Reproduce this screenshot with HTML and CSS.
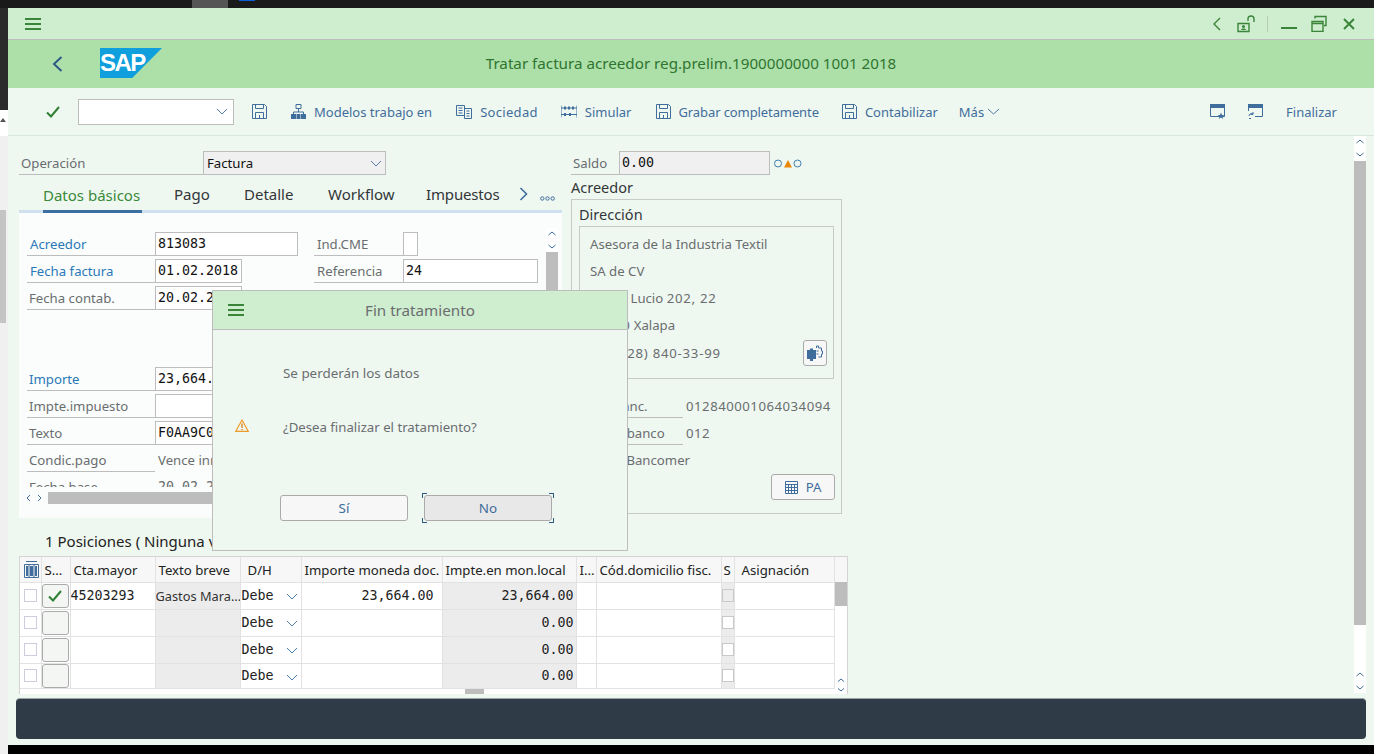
FILE: index.html
```html
<!DOCTYPE html>
<html lang="en">
<head>
    <meta charset="UTF-8">
    <title>Tratar factura acreedor</title>
    <link rel="stylesheet" href="styles.css">
</head>
<body>
    <div class="top-strip">
        <span class="strip-tab"></span>
        <span class="strip-blue"></span>
    </div>
    <div class="desk">
        <div class="side-strip">
            <div class="side-dark"></div>
            <div class="side-light"><i class="side-tri"></i></div>
            <div class="side-thumb"></div>
        </div>
        <div class="desk-main">
            <div class="window">
                <div class="titlebar">
                    <svg class="hamburger" width="16" height="12" viewBox="0 0 16 12"><path d="M0 1h16M0 6h16M0 11h16"/></svg>
                    <div class="win-btns">
                        <svg width="9" height="14" viewBox="0 0 9 14"><path class="g-line" d="M8 1 2 7l6 6"/></svg>
                        <svg width="18" height="18" viewBox="0 0 18 18"><path class="g-line" d="M1 8.500h11v8H1zM11 6V4a3 3 0 0 1 6 0v3"/><circle cx="6.500" cy="11.500" r="1.500" fill="#3a853a"/><path class="g-solid" d="M4 15c0-2 5-2 5 0z"/></svg>
                        <i class="win-sep"></i>
                        <svg width="16" height="4" viewBox="0 0 16 4"><path class="g-thick" d="M0 2h16"/></svg>
                        <svg width="16" height="17" viewBox="0 0 16 17"><path class="g-line" d="M1 6.500h11v10H1zM1 8.500h11M4 3.500V1.500h11v9h-2"/></svg>
                        <svg width="12" height="12" viewBox="0 0 12 12"><path class="g-thick" d="m1 1 10 10M11 1 1 11"/></svg>
                    </div>
                </div>
                <div class="header">
                    <svg class="back" width="11" height="16" viewBox="0 0 11 16"><path d="M9.500 1 2 8l7.500 7"/></svg>
                    <div class="sap-logo">SAP</div>
                    <h1>Tratar factura acreedor reg.prelim.1900000000 1001 2018</h1>
                </div>
                <div class="toolbar">
                    <svg class="check" width="14" height="12" viewBox="0 0 14 12"><path d="m1 6.500 4 4L13 1"/></svg>
                    <div class="combo"><svg class="chev" width="12" height="7" viewBox="0 0 12 7"><path d="m1 1 5 5 5-5"/></svg></div>
                    <svg class="ico save-first" width="15" height="15" viewBox="0 0 15 15"><path d="M.5.500h12l2 2v12H.5zM3.500.500v4h8v-4M3.500 14.500v-6h8v6M7.500 11v3"/></svg>
                    <div class="tool tool-org">
                        <svg class="ico" width="15" height="15" viewBox="0 0 15 15"><path d="M5 .500h5v4H5zM7.500 4.500V8M2.500 10V8h10v2"/><path class="solid" d="M0 10h5v5H0zM5.500 10h4v5h-4zM10 10h5v5h-5z"/></svg>
                        <span>Modelos trabajo en</span>
                    </div>
                    <div class="tool">
                        <svg class="ico" width="16" height="15" viewBox="0 0 16 15"><path d="M.5 1.500h8v10h-8zM8.500 4.500h7v10h-7zM2.500 4h4M2.500 6.500h4M2.500 9h4M10.500 7h3M10.500 9.500h3M10.500 12h3"/></svg>
                        <span class="sociedad">Sociedad</span>
                    </div>
                    <div class="tool">
                        <svg class="ico" width="16" height="13" viewBox="0 0 16 13"><path d="M0 .500v12M16 .500v12M0 3h16M0 9.500h16"/><path class="solid" d="M3 1.500h2v3H3zM7 1.500h2v3H7zM11 1.500h2v3h-2zM3 8h2v3H3zM8 8h2v3H8z"/></svg>
                        <span>Simular</span>
                    </div>
                    <div class="tool tool-grabar">
                        <svg class="ico" width="15" height="15" viewBox="0 0 15 15"><path d="M.5.500h12l2 2v12H.5zM3.500.500v4h8v-4M3.500 14.500v-6h8v6M7.500 11v3"/></svg>
                        <span>Grabar completamente</span>
                    </div>
                    <div class="tool">
                        <svg class="ico" width="15" height="15" viewBox="0 0 15 15"><path d="M.5.500h12l2 2v12H.5zM3.500.500v4h8v-4M3.500 14.500v-6h8v6M7.500 11v3"/></svg>
                        <span>Contabilizar</span>
                    </div>
                    <div class="tool mas">
                        <span>Más</span>
                        <svg class="chev" width="13" height="7" viewBox="0 0 13 7"><path d="m1 1 5.500 5L12 1"/></svg>
                    </div>
                    <div class="tool-right">
                        <svg class="ico" width="15" height="15" viewBox="0 0 15 15"><path d="M.5 2.500h14v10H.5z"/><path class="solid" d="M0 0h15v4H0zM11 8.500l1 2.500h2.500l-2 1.500.8 2.500-2.300-1.500-2.300 1.500.8-2.500-2-1.500H10z"/></svg>
                        <svg class="ico" width="15" height="15" viewBox="0 0 15 15"><path d="M.5 7V2.500h14v10H7"/><path class="solid" d="M0 0h15v4H0z"/><path d="M1 12a2.500 2.500 0 0 1 4-2M5 8v2.500H2.500M1 14.500h2"/></svg>
                        <span class="finalizar">Finalizar</span>
                    </div>
                </div>

                <div class="content">
                    <div class="sheet">
                        <div class="top-row">
                            <div class="left-col">
                                <div class="op-row">
                                    <div class="lbl op-lbl">Operación</div>
                                    <div class="select">Factura<svg class="chev" width="12" height="7" viewBox="0 0 12 7"><path d="m1 1 5 5 5-5"/></svg></div>
                                </div>
                                <div class="tabs">
                                    <span class="tab active">Datos básicos</span>
                                    <span class="tab t-pago">Pago</span>
                                    <span class="tab t-det">Detalle</span>
                                    <span class="tab t-wf">Workflow</span>
                                    <span class="tab t-imp">Impuestos</span>
                                    <svg class="tab-next" width="9" height="14" viewBox="0 0 9 14"><path d="m1.500 1 6 6-6 6"/></svg>
                                    <svg class="tab-more" width="15" height="5" viewBox="0 0 15 5"><circle cx="2.300" cy="2.500" r="1.700"/><circle cx="7.500" cy="2.500" r="1.700"/><circle cx="12.700" cy="2.500" r="1.700"/></svg>
                                </div>
                                <div class="panel">
                                    <div class="panel-top">
                                        <div class="fields">
                                            <div class="row"><div class="lbl link">Acreedor</div><div class="val">813083</div><div class="lbl lbl2">Ind.CME</div><div class="val tiny"></div></div>
                                            <div class="row"><div class="lbl link">Fecha factura</div><div class="val short">01.02.2018</div><div class="lbl lbl2">Referencia</div><div class="val">24</div></div>
                                            <div class="row"><div class="lbl">Fecha contab.</div><div class="val short">20.02.2018</div></div>
                                            <div class="row"></div>
                                            <div class="row"></div>
                                            <div class="row"><div class="lbl link-b">Importe</div><div class="val">23,664.00</div></div>
                                            <div class="row"><div class="lbl">Impte.impuesto</div><div class="val"></div></div>
                                            <div class="row"><div class="lbl">Texto</div><div class="val">F0AA9C07</div></div>
                                            <div class="row"><div class="lbl">Condic.pago</div><div class="plain">Vence inmediatamente</div></div>
                                            <div class="row"><div class="lbl">Fecha base</div><div class="plain mono">20.02.2018</div></div>
                                        </div>
                                        <div class="vscroll small">
                                            <svg width="12" height="24" viewBox="0 0 12 24"><path d="m2.500 7 3.500-3 3.500 3M2.500 17l3.500 3 3.500-3"/></svg>
                                            <div class="thumb"></div>
                                        </div>
                                    </div>
                                    <div class="hscroll">
                                        <svg width="20" height="12" viewBox="0 0 20 12"><path d="M6 3 3 6l3 3M14 3l3 3-3 3"/></svg>
                                        <div class="hthumb"></div>
                                    </div>
                                </div>
                            </div>

                            <div class="right-col">
                                <div class="saldo-row">
                                    <div class="lbl saldo-lbl">Saldo</div>
                                    <div class="val saldo-val">0.00</div>
                                    <svg class="lights" width="28" height="9" viewBox="0 0 28 9"><circle cx="4" cy="4.500" r="3.500"/><path class="tri" d="M10 8.500 14 1l4 7.500z"/><circle cx="23.500" cy="4.500" r="3.500"/></svg>
                                </div>
                                <div class="group-title">Acreedor</div>
                                <div class="group">
                                    <div class="sub-title">Dirección</div>
                                    <div class="addr">
                                        <div class="addr-line">Asesora de la Industria Textil</div>
                                        <div class="addr-line">SA de CV</div>
                                        <div class="addr-line">Av. M. Lucio <span class="dg wide">202, 22</span></div>
                                        <div class="addr-line"><span class="dg">91000</span> Xalapa</div>
                                        <div class="addr-line addr-last">
                                            <span>Tel. <span class="dg wide">(228) 840-33-99</span></span>
                                            <div class="puzzle-btn">
                                                <svg width="16" height="16" viewBox="0 0 16 16"><path class="solid" d="M0 5h3V3.500h3V5h3v9H6v2H3v-2H0z"/><path d="M9.500 3V1h2v2h3v3h1v3h-1v3h-3M9.500 6h2M9.500 9h2"/></svg>
                                            </div>
                                        </div>
                                    </div>
                                    <div class="bank-row"><div class="lbl bank-lbl">Cta.banc.</div><div class="plain dg">012840001064034094</div></div>
                                    <div class="bank-row"><div class="lbl bank-lbl">Clave banco</div><div class="plain dg">012</div></div>
                                    <div class="bank-row"><div class="bank-name">BBVA Bancomer</div></div>
                                    <div class="pa-row">
                                        <div class="pa-btn">
                                            <svg class="ico" width="13" height="13" viewBox="0 0 13 13"><path d="M.5.500h12v12H.5zM.5 3.500h12M3.500 3.500v9M6.500 3.500v9M9.500 3.500v9M.5 6.500h12M.5 9.500h12"/></svg>
                                            PA
                                        </div>
                                    </div>
                                </div>
                            </div>
                        </div>

                        <h2 class="pos-title">1 Posiciones ( Ninguna visualización )</h2>

                        <div class="tbl-wrap">
                            <div class="tbl-body">
                                <table class="grid">
                                    <colgroup>
                                        <col class="c-sel"><col class="c-s"><col class="c-cta"><col class="c-txt"><col class="c-dh"><col class="c-imp"><col class="c-loc"><col class="c-i"><col class="c-cod"><col class="c-chk"><col class="c-asg">
                                    </colgroup>
                                    <thead>
                                        <tr>
                                            <th class="th-sel"><svg width="15" height="17" viewBox="0 0 15 17"><path d="M.5 3.500h14v13H.5zM5 3.500v13M10 3.500v13"/><path class="solid" d="M2 5h2v10H2zM6 5h3v10H6zM11 5h2v10h-2z"/><path d="M2 .500h11"/></svg></th>
                                            <th>S...</th><th>Cta.mayor</th><th>Texto breve</th><th class="th-dh">D/H</th><th>Importe moneda doc.</th><th class="fixed">Impte.en mon.local</th><th>I...</th><th>Cód.domicilio fisc.</th><th class="th-chk">S</th><th class="th-asg">Asignación</th>
                                        </tr>
                                    </thead>
                                    <tbody>
                                        <tr>
                                            <td><i class="cb"></i></td>
                                            <td class="td-btn"><div class="row-btn"><svg class="check" width="14" height="12" viewBox="0 0 14 12"><path d="m1 6.500 4 4L13 1"/></svg></div></td>
                                            <td class="m">45203293</td>
                                            <td class="grey txt">Gastos Mara...</td>
                                            <td class="m dh">Debe<svg class="chev" width="12" height="7" viewBox="0 0 12 7"><path d="m1 1 5 5 5-5"/></svg></td>
                                            <td class="m num doc">23,664.00</td>
                                            <td class="m num grey fixed">23,664.00</td>
                                            <td></td><td></td>
                                            <td class="grey td-chk"><i class="sq off"></i></td>
                                            <td></td>
                                        </tr>
                                        <tr>
                                            <td><i class="cb"></i></td>
                                            <td class="td-btn"><div class="row-btn"></div></td>
                                            <td></td><td class="grey"></td>
                                            <td class="m dh">Debe<svg class="chev" width="12" height="7" viewBox="0 0 12 7"><path d="m1 1 5 5 5-5"/></svg></td>
                                            <td></td>
                                            <td class="m num grey fixed">0.00</td>
                                            <td></td><td></td>
                                            <td class="grey td-chk"><i class="sq"></i></td>
                                            <td></td>
                                        </tr>
                                        <tr>
                                            <td><i class="cb"></i></td>
                                            <td class="td-btn"><div class="row-btn"></div></td>
                                            <td></td><td class="grey"></td>
                                            <td class="m dh">Debe<svg class="chev" width="12" height="7" viewBox="0 0 12 7"><path d="m1 1 5 5 5-5"/></svg></td>
                                            <td></td>
                                            <td class="m num grey fixed">0.00</td>
                                            <td></td><td></td>
                                            <td class="grey td-chk"><i class="sq"></i></td>
                                            <td></td>
                                        </tr>
                                        <tr class="last">
                                            <td><i class="cb"></i></td>
                                            <td class="td-btn"><div class="row-btn"></div></td>
                                            <td></td><td class="grey"></td>
                                            <td class="m dh">Debe<svg class="chev" width="12" height="7" viewBox="0 0 12 7"><path d="m1 1 5 5 5-5"/></svg></td>
                                            <td></td>
                                            <td class="m num grey fixed">0.00</td>
                                            <td></td><td></td>
                                            <td class="grey td-chk"><i class="sq"></i></td>
                                            <td></td>
                                        </tr>
                                    </tbody>
                                </table>
                                <div class="tbl-hscroll"><i class="tbl-hthumb"></i></div>
                            </div>
                            <div class="tbl-vscroll">
                                <div class="tbl-vhead"></div>
                                <div class="tbl-vthumb"></div>
                                <svg width="12" height="16" viewBox="0 0 12 16"><path d="m3 3.500 3-2.500 3 2.500M3 10.500l3 2.500 3-2.500"/></svg>
                            </div>
                        </div>
                    </div>

                    <div class="vscroll main-scroll">
                        <svg width="12" height="24" viewBox="0 0 12 24"><path d="m2.500 7 3.500-3 3.500 3M2.500 17l3.500 3 3.500-3"/></svg>
                        <div class="thumb"></div>
                        <svg class="scroll-end" width="12" height="24" viewBox="0 0 12 24"><path d="m2.500 7 3.500-3 3.500 3M2.500 17l3.500 3 3.500-3"/></svg>
                    </div>
                </div>

                <div class="statusbar"></div>
            </div>
            <div class="taskbar"></div>
        </div>
    </div>

    <div class="dialog">
        <div class="dlg-head">
            <svg class="hamburger" width="16" height="12" viewBox="0 0 16 12"><path d="M0 1h16M0 6h16M0 11h16"/></svg>
            <span class="dlg-title">Fin tratamiento</span>
        </div>
        <div class="dlg-body">
            <div class="dlg-line">Se perderán los datos</div>
            <div class="dlg-line dlg-warn">
                <svg class="warn" width="14" height="13" viewBox="0 0 14 13"><path d="M7 1 .8 12.300h12.400z"/><path class="warn-mark" d="M7 4.500v4.500M7 10v1.300"/></svg>
                <span>¿Desea finalizar el tratamiento?</span>
            </div>
            <div class="dlg-btns">
                <div class="btn">Sí</div>
                <div class="btn btn-focus">No
                    <i class="cn tl"></i><i class="cn tr"></i><i class="cn bl"></i><i class="cn br"></i>
                </div>
            </div>
        </div>
    </div>
</body>
</html>
```

FILE: styles.css
```css
:root {
    --bg: #eff8f0;
    --title: #cfedcf;
    --head: #addfa9;
    --line: #bdbdbd;
    --blue: #3f6d9c;
    --green: #3a853a;
    --label: #6a6d70;
    --sans: 'Noto Sans', 'Open Sans', sans-serif;
    --mono: 'DejaVu Sans Mono', monospace;
}

* {
    margin: 0;
    padding: 0;
    box-sizing: border-box;
}

body {
    width: 1382px;
    height: 754px;
    overflow: hidden;
    background: #fff;
    font-family: var(--sans);
    font-size: 13.2px;
    color: var(--label);
    position: relative;
}

svg {
    display: block;
    flex: none;
}

svg path {
    fill: none;
    stroke: var(--blue);
}

svg path.solid,
.tab-more circle {
    fill: var(--blue);
    stroke: none;
}

/* outer desktop */
.top-strip {
    width: 1374px;
    height: 8px;
    background: #1a1a1a;
    display: flex;
}

.strip-tab {
    width: 36px;
    height: 8px;
    margin-left: 192px;
    background: #555;
}

.strip-blue {
    width: 16px;
    height: 1px;
    margin-left: 11px;
    background: #0b5ed7;
}

.desk {
    display: flex;
    height: 746px;
}

.side-strip {
    width: 8px;
    background: #f0f0f0;
    display: flex;
    flex-direction: column;
}

.side-dark {
    height: 102px;
    background: #2b2b2b;
}

.side-light {
    height: 26px;
    background: #fff;
    padding-top: 8px;
}

.side-tri {
    display: block;
    width: 0;
    height: 0;
    border: 3px solid transparent;
    border-top: 0;
    border-bottom: 4px solid #555;
}

.side-thumb {
    width: 6px;
    height: 113px;
    margin-top: 74px;
    background: #c4c4c4;
}

.desk-main {
    width: 1366px;
}

.window {
    height: 737px;
    background: var(--bg);
}

.taskbar {
    height: 9px;
    background: #000;
}

/* title bars */
.titlebar {
    height: 32px;
    background: var(--title);
    border-bottom: 1px solid var(--line);
    display: flex;
    align-items: center;
    padding: 0 19px 0 17px;
}

.hamburger path {
    stroke: var(--green);
    stroke-width: 2;
}

.win-btns {
    margin-left: auto;
    display: flex;
    align-items: center;
}

.win-btns svg:nth-child(2) {
    margin-left: 16px;
}

.win-btns svg:nth-child(4) {
    margin-left: 13px;
    margin-top: 9px;
}

.win-btns svg:nth-child(5) {
    margin-left: 14px;
}

.win-btns svg:nth-child(6) {
    margin-left: 16px;
}

.win-sep {
    width: 1px;
    height: 16px;
    margin-left: 12px;
    background: #b5ccb5;
}

svg .g-line {
    stroke: var(--green);
    stroke-width: 1.4;
}

svg .g-thick {
    stroke: var(--green);
    stroke-width: 2;
}

svg .g-solid {
    fill: var(--green);
    stroke: none;
}

.header {
    height: 48px;
    background: var(--head);
    display: flex;
    align-items: center;
    position: relative;
    padding-left: 44px;
}

.back path {
    stroke: #2d5a86;
    stroke-width: 2;
}

.sap-logo {
    width: 62px;
    height: 30px;
    margin-left: 37px;
    margin-top: -2px;
    background: #0f9fdc;
    clip-path: polygon(0 0, 100% 0, 52% 100%, 0 100%);
    color: #fff;
    font-family: 'Liberation Sans', sans-serif;
    font-weight: bold;
    font-size: 24px;
    letter-spacing: -1.5px;
    line-height: 30px;
}

.header h1 {
    position: absolute;
    left: 0;
    right: 0;
    margin-top: -2px;
    text-align: center;
    font-size: 15.2px;
    font-weight: 400;
    color: #2f7530;
}

.toolbar {
    height: 48px;
    border-bottom: 1px solid #d9e8dc;
    display: flex;
    align-items: center;
    gap: 23px;
    padding-left: 38px;
    padding-right: 37px;
    color: var(--blue);
    font-size: 13px;
}

.check path {
    stroke: #2f8034;
    stroke-width: 2;
}

.combo {
    width: 156px;
    height: 26px;
    margin-left: -5px;
    background: #fff;
    border: 1px solid var(--line);
    display: flex;
    align-items: center;
    justify-content: flex-end;
    padding-right: 5px;
}

.save-first {
    margin-left: -5px;
    margin-right: 1px;
}

.tool {
    display: flex;
    align-items: center;
    gap: 8px;
}

.tool-org {
    margin-right: 1px;
}

.sociedad {
    letter-spacing: .3px;
}

.tool-grabar {
    margin-left: 1px;
    letter-spacing: -.1px;
}

.mas {
    gap: 3px;
    margin-left: -2px;
}

.tool-right {
    margin-left: auto;
    display: flex;
    align-items: center;
    gap: 23px;
}

/* form area */
.content {
    height: 562px;
    display: flex;
}

.sheet {
    width: 841px;
    padding: 15px 0 0 11px;
}

.top-row {
    display: flex;
    height: 367px;
}

.left-col {
    width: 543px;
}

.right-col {
    width: 271px;
    margin-left: 9px;
}

.op-row {
    display: flex;
    height: 24px;
}

.lbl {
    border-bottom: 1px solid var(--line);
    line-height: 24px;
    padding-left: 2px;
    white-space: nowrap;
    overflow: hidden;
}

.op-lbl {
    width: 184px;
}

.select {
    width: 183px;
    height: 24px;
    background: #f0f0f0;
    border: 1px solid var(--line);
    color: #111;
    line-height: 22px;
    padding: 0 3px;
    display: flex;
    justify-content: space-between;
    align-items: center;
}

.chev path {
    stroke: #4f7ca8;
}

.tabs {
    height: 38px;
    display: flex;
    align-items: flex-end;
    border-bottom: 3px solid #cfe0ee;
    font-size: 15px;
    color: #32363a;
    position: relative;
}

.tab {
    line-height: 21px;
    height: 26px;
    white-space: nowrap;
}

.tab.active {
    margin-left: 24px;
    width: 99px;
    color: #3a8a3a;
    border-bottom: 3px solid #3a6f9f;
    height: 28px;
    margin-bottom: -3px;
}

.t-pago {
    margin-left: 32px;
    width: 37px;
}

.t-det {
    margin-left: 33px;
    width: 51px;
}

.t-wf {
    margin-left: 33px;
    width: 66px;
}

.t-imp {
    margin-left: 32px;
    letter-spacing: -.15px;
}

.tab-next {
    position: absolute;
    left: 500px;
    top: 12px;
}

.tab-next path {
    stroke-width: 1.600;
}

.tab-more {
    position: absolute;
    left: 521px;
    top: 21px;
}

.tab-more circle {
    fill: none;
    stroke: var(--blue);
}

.panel {
    height: 305px;
    background: #fafdfb;
}

.panel-top {
    display: flex;
    height: 274px;
}

.fields {
    width: 527px;
    height: 274px;
    padding: 19px 0 0 8px;
    overflow: hidden;
}

.row {
    display: grid;
    grid-template-columns: 128px 143px 16px 89px 135px;
    height: 24px;
    margin-bottom: 3px;
}

.link {
    color: #2a78b8;
    padding-left: 3px;
}

.link-b {
    color: #2a78b8;
}

.lbl2 {
    grid-column: 4;
    padding-left: 3px;
}

.val {
    background: #fff;
    border: 1px solid var(--line);
    font-family: var(--mono);
    font-size: 13.300px;
    line-height: 21px;
    color: #111;
    padding-left: 2px;
    white-space: nowrap;
    overflow: hidden;
}

.val.short {
    width: 87px;
}

.val.tiny {
    width: 15px;
}

.plain {
    line-height: 24px;
    padding-left: 3px;
    white-space: nowrap;
}

.plain.mono {
    font-family: var(--mono);
    font-size: 13.300px;
}

.dg {
    letter-spacing: .5px;
}

.dg.wide {
    letter-spacing: .75px;
}

.vscroll {
    width: 12px;
    background: #fff;
}

.vscroll .thumb {
    background: #bdbdbd;
}

.small {
    margin-top: 15px;
    height: 259px;
}

.small .thumb {
    height: 235px;
}

.hscroll {
    display: flex;
    align-items: center;
    height: 12px;
    margin: 5px 0 0 5px;
}

.hthumb {
    width: 507px;
    height: 12px;
    margin-left: 4px;
    background: #bdbdbd;
}

/* right column */
.saldo-row {
    display: flex;
    align-items: center;
    height: 24px;
}

.saldo-lbl {
    width: 48px;
    height: 24px;
}

.val.saldo-val {
    width: 151px;
    height: 24px;
    background: #f0f0f0;
}

.lights {
    margin-left: 4px;
}

.lights circle {
    fill: none;
    stroke: #3f7fae;
    stroke-width: 1;
}

svg .tri {
    fill: #e8890c;
    stroke: none;
}

.group-title {
    font-size: 14.500px;
    line-height: 24px;
    color: #32363a;
}

.group {
    height: 315px;
    border: 1px solid #c6cbc6;
    padding: 0 7px;
}

.sub-title {
    font-size: 14.500px;
    line-height: 29px;
    height: 26px;
    color: #32363a;
}

.addr {
    height: 153px;
    border: 1px solid #c6cbc6;
    padding: 4px 6px 0 10px;
}

.addr-line {
    height: 27px;
    line-height: 26px;
    white-space: nowrap;
}

.addr-last {
    display: flex;
    justify-content: space-between;
    align-items: center;
}

.puzzle-btn {
    width: 24px;
    height: 26px;
    border: 1px solid #aaa;
    border-radius: 3px;
    background: #f7f7f7;
    display: flex;
    align-items: center;
    justify-content: center;
}

.bank-row {
    display: flex;
    height: 27px;
}

.addr + .bank-row {
    margin-top: 15px;
}

.bank-lbl {
    width: 104px;
    height: 24px;
    padding-left: 11px;
}

.bank-name {
    padding-left: 11px;
    line-height: 24px;
}

.pa-row {
    display: flex;
    justify-content: flex-end;
    margin-right: -1px;
    margin-top: -1px;
}

.pa-btn {
    width: 64px;
    height: 26px;
    border: 1px solid #aaa;
    border-radius: 3px;
    background: #f7f7f7;
    color: var(--blue);
    display: flex;
    align-items: center;
    justify-content: center;
    gap: 8px;
}

/* positions table */
.pos-title {
    font-size: 15px;
    font-weight: 400;
    line-height: 20px;
    height: 38px;
    padding: 13px 0 0 26px;
    color: #222;
    white-space: nowrap;
}

.tbl-wrap {
    display: flex;
    width: 829px;
    height: 138px;
    border-top: 1px solid #d4d4d4;
    border-left: 1px solid #d4d4d4;
    border-right: 1px solid #d4d4d4;
}

.tbl-body {
    width: 815px;
}

.grid {
    width: 815px;
    table-layout: fixed;
    border-collapse: collapse;
    background: #fff;
    color: #222;
}

.c-sel { width: 21px; }
.c-s { width: 29px; }
.c-cta { width: 85px; }
.c-txt { width: 85px; }
.c-dh { width: 61px; }
.c-imp { width: 141px; }
.c-loc { width: 134px; }
.c-i { width: 20px; }
.c-cod { width: 125px; }
.c-chk { width: 13px; }

.grid th {
    height: 25px;
    background: #f6f7f6;
    font-weight: 400;
    text-align: left;
    padding: 2px 0 0 3px;
    border-right: 1px solid #e2e2e2;
    border-bottom: 1px solid #e2e2e2;
    white-space: nowrap;
    overflow: hidden;
}

.grid th.th-sel {
    padding: 0 0 0 4px;
}

.grid th.th-dh {
    padding-left: 7px;
}

.grid th.th-asg {
    padding-left: 7px;
}

.grid th.th-chk {
    padding-left: 2px;
}

.grid td {
    height: 27px;
    border-right: 1px solid #e2e2e2;
    border-bottom: 1px solid #e2e2e2;
    white-space: nowrap;
    overflow: hidden;
}

.grid .last td {
    height: 25px;
}

.grid td.m {
    font-family: var(--mono);
    font-size: 13.300px;
}

.grid td.grey {
    background: #ececec;
}

.grid td.txt {
    color: #333;
    font-size: 12.800px;
}

.grid td.num {
    text-align: right;
    padding-right: 2px;
}

.grid td.doc {
    padding-right: 8px;
}

.grid .fixed {
    border-left: 1px solid #8f8f8f;
}

.grid td.dh {
    position: relative;
    padding-left: 1px;
}

.dh .chev {
    position: absolute;
    right: 3px;
    top: 10px;
}

.cb {
    display: block;
    width: 13px;
    height: 13px;
    margin-left: 4px;
    border: 1px solid #cfcbdc;
    background: #fff;
}

.grid td.td-btn {
    padding: 0;
}

.row-btn {
    width: 27px;
    height: 24px;
    border: 1px solid #aaa;
    border-radius: 3px;
    background: #f4f6f4;
    display: flex;
    align-items: center;
    justify-content: center;
}

.grid td.td-chk {
    padding: 0;
}

.sq {
    display: block;
    width: 12px;
    height: 13px;
    border: 1px solid #c9c9c9;
    background: #fff;
}

.sq.off {
    background: #ececec;
}

.tbl-hscroll {
    height: 5px;
    background: #fff;
    padding-left: 445px;
}

.tbl-hthumb {
    display: block;
    width: 19px;
    height: 5px;
    background: #bdbdbd;
}

.tbl-vscroll {
    width: 12px;
    background: #fff;
    display: flex;
    flex-direction: column;
}

.tbl-vhead {
    height: 25px;
    background: #f6f7f6;
}

.tbl-vthumb {
    height: 24px;
    background: #bdbdbd;
}

.tbl-vscroll svg {
    margin-top: auto;
}

/* page scrollbar */
.main-scroll {
    margin-left: auto;
    margin-right: 8px;
    width: 12px;
    height: 557px;
    display: flex;
    flex-direction: column;
}

.main-scroll .thumb {
    height: 464px;
    margin-top: 1px;
}

.scroll-end {
    margin-top: auto;
}

.statusbar {
    height: 41px;
    margin: 0 8px;
    background: #2f3b47;
    border-top: 1px solid #9aa3a8;
    border-radius: 4px;
}

/* popup */
.dialog {
    position: absolute;
    left: 212px;
    top: 290px;
    width: 416px;
    height: 261px;
    border: 1px solid var(--line);
    background: var(--bg);
    font-size: 13.400px;
}

.dlg-head {
    height: 39px;
    background: var(--title);
    border-bottom: 1px solid var(--line);
    display: flex;
    align-items: center;
    padding-left: 15px;
}

.dlg-title {
    margin-left: 121px;
    font-size: 15.2px;
    color: #6a6d70;
}

.dlg-body {
    padding-top: 34px;
}

.dlg-line {
    height: 18px;
    line-height: 18px;
    padding-left: 70px;
    margin-bottom: 36px;
}

.dlg-warn {
    display: flex;
    align-items: center;
    padding-left: 22px;
    gap: 34px;
    margin-bottom: 59px;
    font-size: 13.200px;
}

.warn {
    margin-top: -3px;
}

.warn path {
    stroke: #ef9a2a;
    stroke-width: 1.2;
}

.warn .warn-mark {
    stroke: #d9801a;
    stroke-width: 1.3;
}

.dlg-btns {
    display: flex;
    gap: 16px;
    padding-left: 67px;
}

.btn {
    width: 128px;
    height: 26px;
    border: 1px solid #aaa;
    border-radius: 3px;
    background: #f7f7f7;
    color: var(--blue);
    text-align: center;
    line-height: 24px;
    position: relative;
}

.btn-focus {
    background: #e8e8e8;
}

.cn {
    position: absolute;
    width: 5px;
    height: 5px;
    border: 0 solid #2d5a86;
}

.tl { left: -3px; top: -3px; border-width: 1px 0 0 1px; }
.tr { right: -3px; top: -3px; border-width: 1px 1px 0 0; }
.bl { left: -3px; bottom: -3px; border-width: 0 0 1px 1px; }
.br { right: -3px; bottom: -3px; border-width: 0 1px 1px 0; }
```
